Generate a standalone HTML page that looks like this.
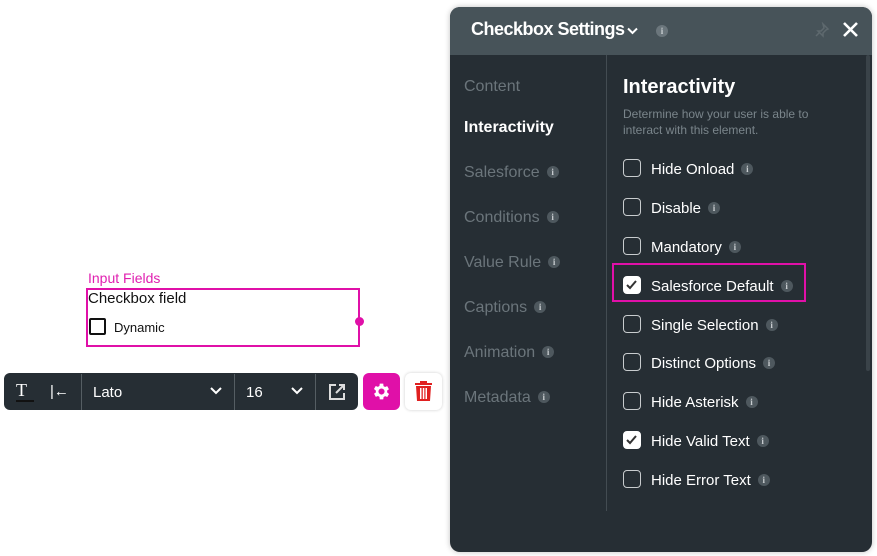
<!DOCTYPE html>
<html><head><style>
*{margin:0;padding:0;box-sizing:border-box}
body{width:877px;height:556px;background:#fff;position:relative;overflow:hidden;font-family:"Liberation Sans",sans-serif}
.a{position:absolute}
.panel{left:450px;top:7px;width:422px;height:545px;background:#262e34;border-radius:10px;overflow:hidden;box-shadow:0 0 6px rgba(0,0,0,.25)}
.hdr{left:0;top:0;width:422px;height:48px;background:#475359}
.nav{left:14px;font-size:16px;color:#6b757b}
.info{display:inline-block;width:12px;height:12px;border-radius:50%;background:#4e585e;color:#c8cdd0;font-size:9px;line-height:12px;text-align:center;font-family:"Liberation Serif",serif;font-weight:bold;vertical-align:2px;margin-left:7px}
.row{left:173px;height:20px;font-size:15px;color:#fff;line-height:20px}
.cb{position:absolute;left:0;top:0;width:18px;height:18px;border:1.5px solid #c8ccce;border-radius:4px}
.cb.on{background:#fff;border-color:#fff}
.row span.t{position:absolute;left:28px;top:1px;white-space:nowrap}
</style></head><body>
<div class="a" style="left:88px;top:270px;font-size:14px;color:#e020b0">Input Fields</div>
<div class="a" style="left:86px;top:288px;width:274px;height:59px;border:2px solid #e010a8"></div>
<div class="a" style="left:355px;top:317px;width:9px;height:9px;border-radius:50%;background:#e010a8"></div>
<div class="a" style="left:88px;top:290px;font-size:15px;color:#111">Checkbox field</div>
<div class="a" style="left:89px;top:318px;width:17px;height:17px;border:2px solid #111;border-radius:2px"></div>
<div class="a" style="left:114px;top:320px;font-size:13px;color:#111">Dynamic</div>
<div class="a" style="left:4px;top:373px;width:354px;height:37px;background:#262e34;border-radius:6px"></div>
<div class="a" style="left:16px;top:380px;font-size:18px;color:#fff;font-family:'Liberation Serif',serif">T</div>
<div class="a" style="left:16px;top:400px;width:18px;height:2px;background:#111"></div>
<div class="a" style="left:50px;top:383px;font-size:15px;color:#fff">|←</div>
<div class="a" style="left:81px;top:374px;width:1px;height:36px;background:#555e63"></div>
<div class="a" style="left:93px;top:384px;font-size:15px;color:#fff">Lato</div>
<svg class="a" style="left:210px;top:387px" width="12" height="8" viewBox="0 0 12 8"><path d="M1 1l5 5 5-5" stroke="#fff" stroke-width="2" fill="none"/></svg>
<div class="a" style="left:234px;top:374px;width:1px;height:36px;background:#555e63"></div>
<div class="a" style="left:246px;top:384px;font-size:15px;color:#fff">16</div>
<svg class="a" style="left:291px;top:387px" width="12" height="8" viewBox="0 0 12 8"><path d="M1 1l5 5 5-5" stroke="#fff" stroke-width="2" fill="none"/></svg>
<div class="a" style="left:315px;top:374px;width:1px;height:36px;background:#555e63"></div>
<svg class="a" style="left:328px;top:383px" width="18" height="18" viewBox="0 0 18 18" fill="none" stroke="#ddd" stroke-width="2"><path d="M8 2H2v14h14v-6M11 2h5v5M16 2L8 10"/></svg>
<div class="a" style="left:363px;top:373px;width:37px;height:37px;background:#e010a8;border-radius:6px"></div>
<svg class="a" style="left:371px;top:381px" width="21" height="21" viewBox="0 0 24 24"><path fill="#fff" d="M19.4 13a7.5 7.5 0 000-2l2.1-1.6-2-3.5-2.5 1a7 7 0 00-1.7-1L15 3h-4l-.4 2.7a7 7 0 00-1.7 1l-2.5-1-2 3.5L6.6 11a7.5 7.5 0 000 2l-2.1 1.6 2 3.5 2.5-1a7 7 0 001.7 1L11 21h4l.4-2.7a7 7 0 001.7-1l2.5 1 2-3.5zM13 15.5a3.5 3.5 0 110-7 3.5 3.5 0 010 7z" transform="translate(-1 0)"/></svg>
<div class="a" style="left:405px;top:373px;width:37px;height:37px;background:#fff;border-radius:6px;box-shadow:0 0 3px rgba(0,0,0,.2)"></div>
<svg class="a" style="left:415px;top:381px" width="17" height="20" viewBox="0 0 17 20"><path fill="#e02020" d="M5 0h7v2h5v2H0V2h5zM1 5h15l-1 15H2zM5 7v11h1.5V7zM7.8 7v11h1.5V7zM10.5 7v11H12V7z"/></svg>

<div class="a panel">
<div class="a hdr"></div>
<div class="a" style="left:21px;top:12px;font-size:18px;font-weight:bold;color:#fff;letter-spacing:-0.5px;white-space:nowrap">Checkbox Settings</div>
<svg class="a" style="left:177px;top:20px" width="11" height="8" viewBox="0 0 11 8"><path d="M1 1.5l4.5 4.5 4.5-4.5" stroke="#fff" stroke-width="2" fill="none"/></svg>
<div class="a" style="left:206px;top:16px"><span class="info" style="margin:0;background:#6b767c">i</span></div>
<svg class="a" style="left:364px;top:15px" width="16" height="16" viewBox="0 0 16 16" fill="none" stroke="#5e696e" stroke-width="1.5"><path d="M9 2l5 5-2 1-3 3 0 3-5-5 3 0 3-3zM6 10l-4 4"/></svg>
<svg class="a" style="left:392px;top:14px" width="17" height="17" viewBox="0 0 17 17"><path d="M2 2l13 13M15 2L2 15" stroke="#fff" stroke-width="2.6"/></svg>
<div class="a" style="left:156px;top:48px;width:1px;height:456px;background:#434c52"></div>
<div class="a" style="left:416px;top:48px;width:4px;height:316px;background:#3a4349;border-radius:2px"></div>
<div class="a nav" style="top:71px">Content</div>
<div class="a nav" style="top:112px;color:#fff;font-weight:bold">Interactivity</div>
<div class="a nav" style="top:157px">Salesforce<span class="info">i</span></div>
<div class="a nav" style="top:202px">Conditions<span class="info">i</span></div>
<div class="a nav" style="top:247px">Value Rule<span class="info">i</span></div>
<div class="a nav" style="top:292px">Captions<span class="info">i</span></div>
<div class="a nav" style="top:337px">Animation<span class="info">i</span></div>
<div class="a nav" style="top:382px">Metadata<span class="info">i</span></div>
<div class="a" style="left:173px;top:69px;font-size:20px;font-weight:bold;color:#fff">Interactivity</div>
<div class="a" style="left:173px;top:99px;font-size:12px;color:#7a858b;line-height:16px">Determine how your user is able to<br>interact with this element.</div>
<div class="a row" style="top:152px"><div class="cb"></div><span class="t">Hide Onload<span class="info">i</span></span></div>
<div class="a row" style="top:191px"><div class="cb"></div><span class="t">Disable<span class="info">i</span></span></div>
<div class="a row" style="top:230px"><div class="cb"></div><span class="t">Mandatory<span class="info">i</span></span></div>
<div class="a" style="left:162px;top:256px;width:194px;height:39px;border:2px solid #e010a8"></div>
<div class="a row" style="top:269px"><div class="cb on"><svg width="15" height="15" viewBox="0 0 15 15"><path d="M3 8l3 3 6-7" stroke="#333" stroke-width="2" fill="none"/></svg></div><span class="t">Salesforce Default<span class="info">i</span></span></div>
<div class="a row" style="top:308px"><div class="cb"></div><span class="t">Single Selection<span class="info">i</span></span></div>
<div class="a row" style="top:346px"><div class="cb"></div><span class="t">Distinct Options<span class="info">i</span></span></div>
<div class="a row" style="top:385px"><div class="cb"></div><span class="t">Hide Asterisk<span class="info">i</span></span></div>
<div class="a row" style="top:424px"><div class="cb on"><svg width="15" height="15" viewBox="0 0 15 15"><path d="M3 8l3 3 6-7" stroke="#333" stroke-width="2" fill="none"/></svg></div><span class="t">Hide Valid Text<span class="info">i</span></span></div>
<div class="a row" style="top:463px"><div class="cb"></div><span class="t">Hide Error Text<span class="info">i</span></span></div>
</div>
</body></html>
